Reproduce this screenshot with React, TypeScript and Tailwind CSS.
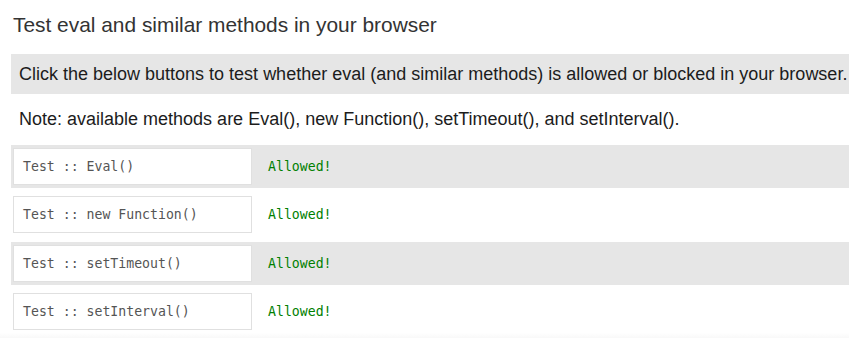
import React from "react";

const rows = [
  { label: "Test :: Eval()", gray: true },
  { label: "Test :: new Function()", gray: false },
  { label: "Test :: setTimeout()", gray: true },
  { label: "Test :: setInterval()", gray: false },
];

export default function App() {
  return (
    <div className="w-[849px] h-[338px] overflow-hidden bg-white font-['Liberation_Sans',Arial,sans-serif]">
      <h1 className="pl-[13px] pt-[13px] text-[20.9px] leading-[24px] text-[#333] font-normal">
        Test eval and similar methods in your browser
      </h1>
      <div className="ml-[11px] mt-[17px] h-[40px] bg-[#e6e6e6] pl-[8px] flex items-center text-[18px] text-[#1c1c1c] whitespace-nowrap">
        Click the below buttons to test whether eval (and similar methods) is allowed or blocked in your browser.
      </div>
      <div className="ml-[19px] h-[51px] flex items-center text-[18px] text-[#1c1c1c] whitespace-nowrap">
        Note: available methods are Eval(), new Function(), setTimeout(), and setInterval().
      </div>
      <div className="ml-[11px] flex flex-col">
        {rows.map((r, i) => (
          <div
            key={i}
            className={`h-[43px] pl-[2px] flex items-center ${r.gray ? "bg-[#e6e6e6]" : ""} ${
              i === 0 ? "" : i % 2 === 1 ? "mt-[5px]" : "mt-[6px]"
            }`}
          >
            <button className="w-[239px] h-[37px] border border-[#e0e0e0] bg-white text-left pl-[9px] font-['DejaVu_Sans_Mono',monospace] text-[13.2px] text-[#555]">
              {r.label}
            </button>
            <span className="ml-[16px] font-['DejaVu_Sans_Mono',monospace] text-[13.2px] text-[#008000]">
              Allowed!
            </span>
          </div>
        ))}
      </div>
      <div className="h-[8px] bg-gradient-to-b from-white to-[#f4f4f4]" />
    </div>
  );
}
